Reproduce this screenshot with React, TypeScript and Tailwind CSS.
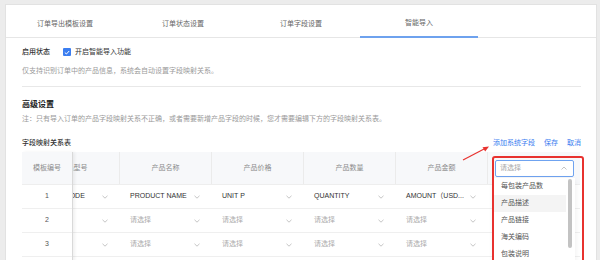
import React from 'react';

const Chevron = ({ up = false }: { up?: boolean }) => (
  <svg width="6" height="4" viewBox="0 0 6 4" className="shrink-0">
    <path
      d={up ? 'M0.5 3.5L3 1L5.5 3.5' : 'M0.5 0.8L3 3.2L5.5 0.8'}
      fill="none"
      stroke="#b5b5b5"
      strokeWidth="0.8"
    />
  </svg>
);

const tabs = ['订单导出模板设置', '订单状态设置', '订单字段设置', '智能导入'];
const columns = ['产品型号', '产品名称', '产品价格', '产品数量', '产品金额'];
const rows = [
  ['MODEL CODE', 'PRODUCT NAME', 'UNIT P', 'QUANTITY', 'AMOUNT（USD...', ''],
  ['', '', '', '', '', ''],
  ['', '', '', '', '', ''],
  ['', '', '', '', '', ''],
];
const options = ['每包装产品数', '产品描述', '产品链接', '海关编码', '包装说明'];

export default function App() {
  return (
    <div className="h-[260px] overflow-hidden bg-[#ececec] pt-[4px] pl-[5px] pr-[3px] font-['Liberation_Sans','Noto_Sans_CJK_SC',sans-serif] text-[7px]">
      <div className="h-[400px] border border-[#e2e2e2] bg-white">
        {/* Tabs */}
        <div className="flex h-[33px] border-b border-[#e6e6e6]">
          {tabs.map((t, i) => (
            <div
              key={t}
              className={`-mb-px flex h-[33px] w-[118px] items-center justify-center pt-[5px] leading-[14px] text-[#666] ${
                i === 3 ? 'border-b-2 border-[#6ea2ee]' : ''
              }`}
            >
              {t}
            </div>
          ))}
        </div>

        <div className="pl-[16px] pr-[15px]">
          {/* 启用状态 */}
          <div className="mt-[7px] flex h-[14px] items-center leading-[14px]">
            <span className="w-[41px] font-medium text-[#333]">启用状态</span>
            <span className="flex h-[8px] w-[8px] items-center justify-center rounded-[1px] bg-[#3c7ef0]">
              <svg width="6" height="5" viewBox="0 0 6 5">
                <path d="M0.8 2.5L2.4 4L5.2 1" fill="none" stroke="#fff" strokeWidth="1" />
              </svg>
            </span>
            <span className="ml-[4px] text-[#333]">开启智能导入功能</span>
          </div>
          <div className="mt-[5px] h-[14px] leading-[14px] text-[#9a9a9a]">
            仅支持识别订单中的产品信息，系统会自动设置字段映射关系。
          </div>
          <div className="mt-[8px] h-px bg-[#e8e8e8]" />

          {/* 高级设置 */}
          <div className="mt-[11px] h-[14px] text-[8px] font-bold leading-[14px] text-[#222]">高级设置</div>
          <div className="h-[14px] leading-[14px] text-[#9a9a9a]">
            注：只有导入订单的产品字段映射关系不正确，或者需要新增产品字段的时候，您才需要编辑下方的字段映射关系表。
          </div>

          <div className="mt-[10px] flex h-[14px] items-center justify-between leading-[14px]">
            <span className="font-medium text-[#333]">字段映射关系表</span>
            <div className="flex gap-[9px] text-[#3a7ef0]">
              <span>添加系统字段</span>
              <span>保存</span>
              <span>取消</span>
            </div>
          </div>

          {/* Table */}
          <div className="relative mt-[2px] flex">
            <div className="z-10 w-[51px] shrink-0 border-r border-[#d9d9d9] bg-white shadow-[2px_0_3px_rgba(0,0,0,0.06)]">
              <div className="flex h-[33px] items-center justify-center border-b border-[#eeeeee] bg-[#f7f8fa] text-[#8c8c8c]">
                模板编号
              </div>
              {rows.map((_, i) => (
                <div key={i} className="flex h-[24px] items-center justify-center border-b border-[#efefef] text-[#555]">
                  {i + 1}
                </div>
              ))}
            </div>
            <div className="min-w-0 flex-1 overflow-hidden">
              <div className="-ml-[45px] w-[552px]">
                <div className="flex h-[33px] border-b border-[#eeeeee] bg-[#f7f8fa]">
                  {columns.map((c) => (
                    <div key={c} className="flex w-[92px] items-center justify-center border-r border-[#ebebeb] text-[#8c8c8c]">
                      {c}
                    </div>
                  ))}
                  <div className="flex w-[92px] items-center pl-[7px] pr-[6px]">
                    <div className="flex h-[17px] flex-1 items-center justify-between rounded-[2px] border border-[#6fa3f0] bg-white pl-[4px] pr-[6px] text-[#a8a8a8]">
                      请选择
                      <Chevron up />
                    </div>
                  </div>
                </div>
                {rows.map((r, i) => (
                  <div key={i} className="flex h-[24px] border-b border-[#efefef]">
                    {r.map((v, j) => (
                      <div key={j} className="flex w-[92px] items-center justify-between pl-[10px] pr-[12px]">
                        <span className={`whitespace-nowrap ${v ? 'text-[#333]' : 'text-[#ababab]'}`}>
                          {v || (j === 0 || j === 5 ? '' : '请选择')}
                        </span>
                        <Chevron />
                      </div>
                    ))}
                  </div>
                ))}
              </div>
            </div>

            {/* open dropdown */}
            <div className="absolute left-[472px] top-[26px] z-20 w-[81px] bg-white shadow-[0_2px_6px_rgba(0,0,0,0.08)]">
              {options.map((o, i) => (
                <div
                  key={o}
                  className={`mr-[9px] flex h-[17px] items-center pl-[7px] text-[#555] ${i === 1 ? 'bg-[#f4f4f4]' : ''}`}
                >
                  {o}
                </div>
              ))}
              <div className="absolute right-[3px] top-[1px] h-[69px] w-[4px] rounded-full bg-[#c3c3c3]" />
            </div>

            {/* annotation */}
            <div className="absolute left-[470px] top-[4px] z-30 h-[110px] w-[92px] rounded-[3px] border-2 border-[#e8322f]" />
            <svg className="absolute left-[438px] top-[-9px] z-30" width="32" height="20" viewBox="0 0 32 20">
              <line x1="3" y1="17" x2="25" y2="5.5" stroke="#e8322f" strokeWidth="1.2" />
              <path d="M29 3.5L22.5 4.2L25.2 8.6Z" fill="#e8322f" />
            </svg>
          </div>
        </div>
      </div>
    </div>
  );
}
